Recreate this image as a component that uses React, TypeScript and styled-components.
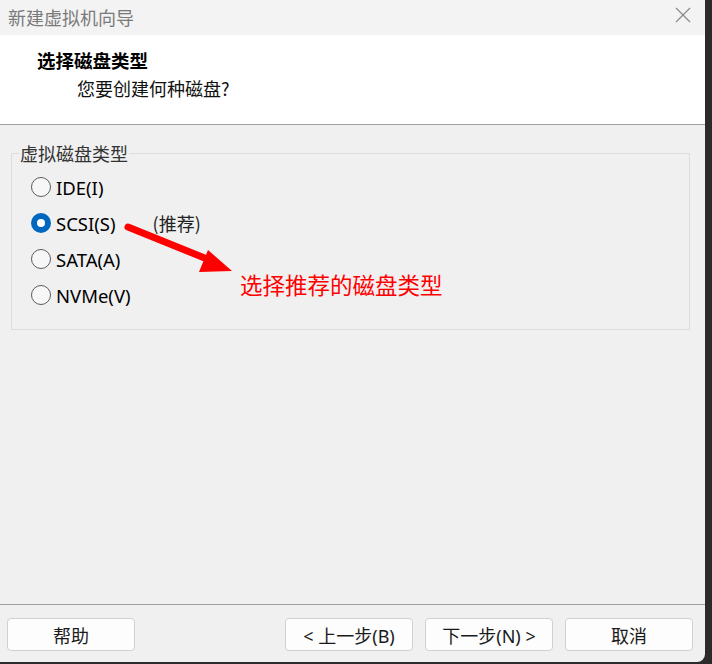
import React from "react";
import styled, { createGlobalStyle } from "styled-components";

const Global = createGlobalStyle`
  html, body { margin: 0; padding: 0; }
  body {
    background: #2b2b2b;
    width: 712px;
    height: 664px;
    overflow: hidden;
    font-family: "Noto Sans", "Noto Sans CJK SC", sans-serif;
  }
`;

const Window = styled.div`
  width: 705px;
  height: 662px;
  background: #f0f0f0;
  border-bottom-right-radius: 8px;
  display: flex;
  flex-direction: column;
  overflow: hidden;
`;

const TitleBar = styled.div`
  height: 35px;
  flex: none;
  background: #f3f3f3;
  display: flex;
  align-items: center;
  justify-content: space-between;
  padding: 0 14px 0 8px;
  box-sizing: border-box;
`;

const TitleText = styled.span`
  font-family: "Noto Sans CJK SC", sans-serif;
  font-size: 18px;
  color: #7a7a7a;
  line-height: 1;
  margin-top: -2px;
`;

const CloseBtn = styled.span`
  display: flex;
  width: 16px;
  height: 16px;
  margin-top: -6px;
`;

const Header = styled.div`
  height: 89px;
  flex: none;
  background: #ffffff;
  border-bottom: 1px solid #a0a0a0;
  display: flex;
  flex-direction: column;
`;

const HeaderTitle = styled.div`
  font-family: "Noto Sans CJK SC", sans-serif;
  font-weight: 700;
  font-size: 18.5px;
  color: #000;
  margin: 12px 0 0 37px;
  line-height: 26px;
`;

const HeaderSub = styled.div`
  font-family: "Noto Sans CJK SC", sans-serif;
  font-size: 18px;
  color: #111;
  margin: 2px 0 0 77px;
  line-height: 26px;
`;

const Body = styled.div`
  flex: 1;
  position: relative;
  padding: 16px 14px 0 11px;
`;

const Group = styled.fieldset`
  margin: 0;
  width: 679px;
  height: 189px;
  box-sizing: border-box;
  border: 1px solid #dcdcdc;
  border-radius: 0;
  padding: 4px 0 0 19px;
  display: flex;
  flex-direction: column;
`;

const Legend = styled.legend`
  font-family: "Noto Sans CJK SC", sans-serif;
  font-size: 18px;
  color: #333;
  padding: 0 1px;
  margin-left: -12px;
  line-height: 24px;
`;

const Option = styled.label`
  display: flex;
  align-items: center;
  height: 36px;
  font-family: "Noto Sans", "Noto Sans CJK SC", sans-serif;
  font-size: 18.5px;
  color: #000;
`;

const Radio = styled.span<{ $checked?: boolean }>`
  width: 20px;
  height: 20px;
  box-sizing: border-box;
  border-radius: 50%;
  flex: none;
  margin-right: 5px;
  display: flex;
  align-items: center;
  justify-content: center;
  background: ${(p) => (p.$checked ? "#0067c0" : "#f7f7f7")};
  border: ${(p) => (p.$checked ? "none" : "1px solid #5c5c5c")};
  &::after {
    content: "";
    display: ${(p) => (p.$checked ? "block" : "none")};
    width: 8px;
    height: 8px;
    border-radius: 50%;
    background: #fff;
  }
`;

const Hint = styled.span`
  font-family: "Noto Sans CJK SC", sans-serif;
  font-size: 18px;
  color: #222;
  margin-left: 37px;
`;

const Annotation = styled.div`
  position: absolute;
  left: 0;
  top: 0;
  width: 100%;
  height: 100%;
  pointer-events: none;
`;

const ArrowSvg = styled.svg`
  position: absolute;
  left: 0;
  top: -126px;
  width: 705px;
  height: 400px;
`;

const RedNote = styled.div`
  position: absolute;
  left: 240px;
  top: 144px;
  font-family: "Noto Sans CJK SC", sans-serif;
  font-size: 22.5px;
  line-height: 30px;
  color: #ff0000;
  white-space: nowrap;
`;

const Footer = styled.div`
  height: 58px;
  flex: none;
  border-top: 1px solid #a0a0a0;
  display: flex;
  align-items: flex-start;
  padding: 13px 0 0 7px;
  box-sizing: border-box;
`;

const Button = styled.button<{ $gap?: number }>`
  width: 128px;
  height: 33px;
  margin-left: ${(p) => p.$gap ?? 0}px;
  background: #fdfdfd;
  border: 1px solid #d0d0d0;
  border-radius: 4px;
  font-family: "Noto Sans", "Noto Sans CJK SC", sans-serif;
  font-size: 18px;
  color: #1a1a1a;
  padding: 0;
  display: flex;
  align-items: center;
  justify-content: center;
`;

const options = [
  { label: "IDE(I)", checked: false },
  { label: "SCSI(S)", checked: true, hint: "(推荐)" },
  { label: "SATA(A)", checked: false },
  { label: "NVMe(V)", checked: false },
];

export default function App() {
  return (
    <>
      <Global />
      <Window>
        <TitleBar>
          <TitleText>新建虚拟机向导</TitleText>
          <CloseBtn>
            <svg width="16" height="16" viewBox="0 0 16 16">
              <path d="M1 1 L15 15 M15 1 L1 15" stroke="#8a8a8a" strokeWidth="1.2" fill="none" />
            </svg>
          </CloseBtn>
        </TitleBar>
        <Header>
          <HeaderTitle>选择磁盘类型</HeaderTitle>
          <HeaderSub>您要创建何种磁盘?</HeaderSub>
        </Header>
        <Body>
          <Group>
            <Legend>虚拟磁盘类型</Legend>
            {options.map((o) => (
              <Option key={o.label}>
                <Radio $checked={o.checked} />
                {o.label}
                {o.hint && <Hint>{o.hint}</Hint>}
              </Option>
            ))}
          </Group>
          <Annotation>
            <ArrowSvg viewBox="0 0 705 400">
              <line x1="128" y1="228" x2="212" y2="262" stroke="#ff0000" strokeWidth="7" strokeLinecap="round" />
              <polygon points="208,251 199,273 232,272" fill="#ff0000" />
            </ArrowSvg>
            <RedNote>选择推荐的磁盘类型</RedNote>
          </Annotation>
        </Body>
        <Footer>
          <Button>帮助</Button>
          <Button $gap={150}>&lt; 上一步(B)</Button>
          <Button $gap={12}>下一步(N) &gt;</Button>
          <Button $gap={12}>取消</Button>
        </Footer>
      </Window>
    </>
  );
}
